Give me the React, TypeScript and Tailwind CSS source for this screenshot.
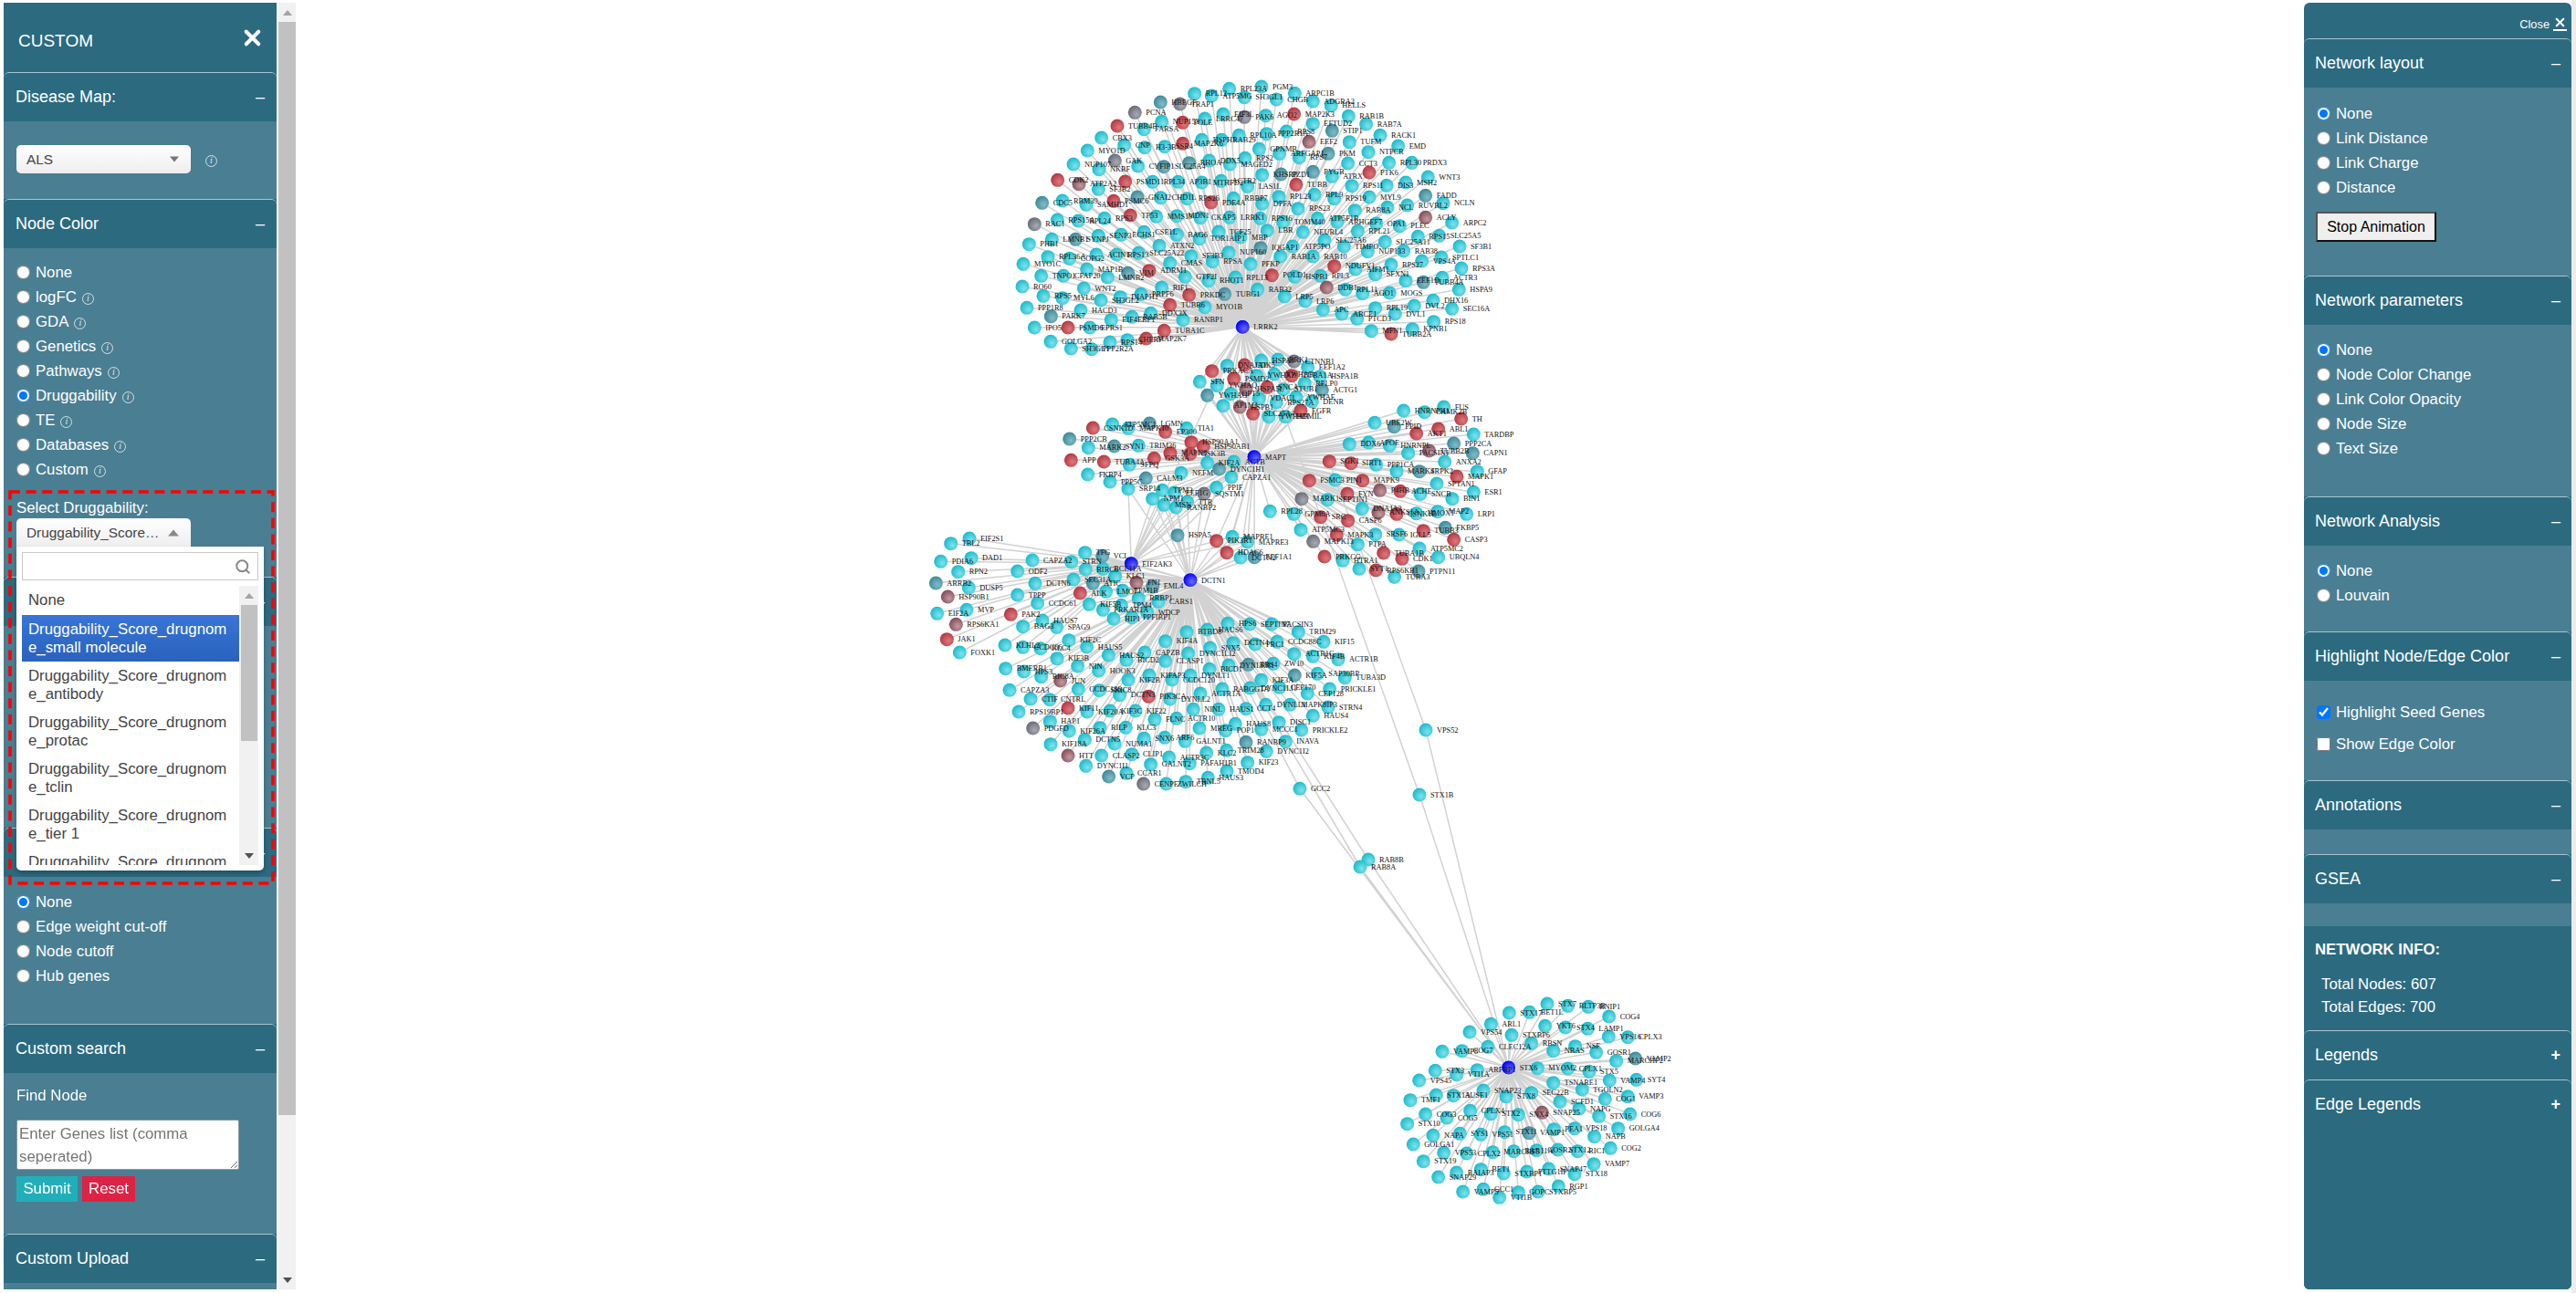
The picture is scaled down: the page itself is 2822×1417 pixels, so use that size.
import React from 'react';
import { Search, X } from 'lucide-react';

type GNode = { zx: number; zy: number; x: number; y: number; label: string; t: string };

const parse = (ox: number, oy: number, raw: string): GNode[] =>
  raw
    .split(';')
    .map(s => s.trim())
    .filter(Boolean)
    .map(s => {
      const [a, b, label, t = 'c'] = s.split(' ');
      return { zx: +a, zy: +b, x: ox + +a / 3, y: oy + +b / 3, label, t };
    });

// coordinates are read off 3x crops, each cluster keeps the origin of its crop
const topNodes = parse(1120, 70, `
680 82 RPL23A;786 75 PGM3;566 98 RPL12;622 105 ATP5MG;730 110 SH3GL1;895 97 ARPC1B;835 117 CHGB;955 123 ADGRA2;1015 137 HELLS;
454 126 HBEGF t;518 132 TRAP1 g;370 160 PCNA g;660 165 EIF3L;458 190 NUP153;527 193 POLE r;600 180 LRRC47;730 175 PAK6 g;800 170 AGO2;893 165 MAP2K3 r;
955 197 EFTUD2;1072 172 RAB1B;1130 198 RAB7A;1018 220 STIP1 t;1176 235 RACK1;1235 270 EMD;1075 257 TUFM;942 256 EEF2 p;1137 290 NTPCR;1005 295 PKM t;
1070 327 CCT3;1205 325 RPL30;1280 325 PRDX3;1140 357 PTK6 r;312 204 TUBB4B r;400 215 FARSA;260 243 CBX3;335 267 CNP;402 275 H3-3B;468 272 SSR4;527 262 MAP2K6 r;
590 250 HSPH1;655 250 RAB29;712 235 RPL10A;803 230 PPP2R1A;868 222 RPS8;778 280 GPNMB;845 295 ARFGAP1;910 308 RPS7;214 285 MYO1D;168 330 NUP107;252 347 NKRF;
304 318 GAK g;380 336 CYFIP1;465 338 SLC25A4 t;548 326 RHOA t;614 318 DDX5;682 330 MAGED2;732 310 RPS2;788 365 KHSRP;850 363 PZD1 t;955 355 PYGB t;1018 370 ATRX;
1333 372 WNT3;1260 390 MSH2;1197 400 DIS3;1083 401 RPS11;116 382 CDK2 r;186 395 ATP2A2 p;250 412 SF3B2;338 387 PSMD11 r;428 388 RPL34;512 388 AP3B1;590 390 MTHFD2;
653 385 ACTR2;740 403 LAS1L;900 397 TUBB r;960 430 RPL9;1025 443 RPS19;1140 438 MYL9;1325 433 FADD t;1383 458 NCLN;1265 465 RUVBL2;1200 472 NCL;1093 482 RAB8A;
65 457 CDC5 t;132 450 RBM39;210 463 SAMHD1;300 451 PSMC6 r;378 438 GNAI2 t;455 440 CHD1L;542 443 RPS26;620 456 PDE4A r;694 442 RBBP7;843 437 RPL23;788 460 DPFA;
906 476 RPS23;1325 505 ACLY p;1412 522 ARPC2;1163 525 OPA1;1240 533 PLEC;970 508 ATP5F1B;1035 520 ARHGEF7;857 520 TOMM40;782 508 RPS16;681 505 LRRK1;
40 527 RAC1 g;115 513 RPS15A;184 516 RPL24;270 508 RPS3;355 498 TP53 r;440 502 MMS19;508 500 MDN1;585 506 CKAP5;97 577 LMNB1;175 577 SYNPJ t;250 565 SENP3;325 562 ECHS1;
400 553 CSE1L;508 562 BAG6;645 552 TCF25;582 575 TOR1AIP1;717 570 MBP;805 548 LBR;922 553 NEURL4;1102 550 RPL21;1300 568 RPS15;1370 565 SLC25A5;1192 585 SLC25A11;
993 580 SLC25A6;1057 600 TIMPO;22 593 PHB1;84 635 RPL36A;155 640 COPG2;243 627 ACIN1;310 627 RPS13;382 622 SLC25A22;450 598 ATXN2;555 632 SF3B3;678 620 NUP160;
783 605 IQGAP1 t;888 600 ATP5PO;848 633 RAB1A;955 633 RAB10;1135 617 NUP133;1253 615 RAB38;1313 648 VPS4A;1377 636 SPTLC1;1437 600 SF3B1;1443 672 RPS3A;3 658 MYO1C;
62 697 TNPO1;135 697 CFAP20;212 675 MAP1B;280 702 LMNB2;347 688 VIM t;417 680 ADRM1 r;485 655 CMAS;625 650 RPSA;750 658 PFKP;1025 665 NDUFV1 r;1095 675 AIFM1;
1212 660 RPS27;1160 692 SFXN1;820 695 POLD1 r;895 700 HSPB1;980 697 RPL3;535 700 GTF2I;612 713 RHOT1;700 702 RPL13;1260 713 EEF1D;1318 718 TUBB4A t;1380 703 ACTR3;
1000 735 DDB1 p;1062 742 RPL11;1118 755 AGO1;1207 753 MOGS;1435 742 HSPA9;0 732 RO60;202 738 WNT2;69 763 RPS5;132 770 MYL6;258 777 SH3GL2;322 767 DIAPH1;390 757 PRPF6;
458 735 RIF1;548 760 PRKDC r;665 757 TUBG1 t;773 742 RAB32;862 765 LRP5;930 780 LRP6;1288 795 DVL2;1350 778 DHX16;1412 805 SEC16A;1160 803 RPL19;1225 822 DVL1;988 808 APC;
1050 822 ABCE1;1100 838 PTCD3;1352 848 RPS18;1282 872 KPNB1;1212 888 TUBB2A r;1147 878 MFN1;15 802 PPP1R8;94 830 PARK7 t;192 810 HACD3;292 842 EIF4EBP1;360 832 RAB5B;
422 820 DDX3X;485 793 TUBB6 r;600 800 MYO1B;528 842 RANBP1;466 877 TUBA1C r;40 867 IPO5;150 867 PSMD6 r;222 867 EPRS1;93 913 GOLGA2;160 936 SH3GL1;228 938 PPP2R2A;
288 915 RPS14;345 908 CHERP;407 903 MAP2K7 r`);

const midNodes = parse(1130, 370, `
755 75 HSPA8;810 72 BRK1;863 78 CTNNB1 g;908 97 EEF1A2;643 92 DNAJA1;700 90 CDK5 r;593 110 PRKACA r;553 145 SFN;665 135 PSMD2 r;740 125 YWHAZ;798 120 YWHAB;855 125 TUBA1A r;
948 128 HSPA1B;898 150 RPLP0;955 172 ACTG1 t;610 158 YWHAQ;578 190 YWHAG t;705 170 HSPA5L p;775 163 SNCA r;828 170 STUB1;870 195 YWHAE;655 185 OPT5;748 200 VDAC1;805 213 RPS27A;
922 210 DENR;630 224 AP1M1;685 228 HSPB1 p;728 250 SLC25A4 r;780 260 YWHAH;835 260 HDMIL;885 240 EGFR r;1223 240 HNRNPH1;1292 245 CAMK2B;1355 228 FUS;1412 267 TH r;1128 280 UBE2W;
1192 293 PPID t;1265 315 AKT1 r;1337 300 ABL1 r;1453 318 TARDBP;1045 350 DDX6;1108 345 APOE;1177 355 HNRNPL;1238 380 PACSIN1;1307 372 TUBB2B p;1388 348 PPP2CA t;1450 380 CAPN1 t;
1358 408 ANXA2;979 407 SGK1 r;1050 413 SIRT1 r;1133 418 PPP1CA;1200 440 MARK4;1275 440 SRPK2 t;1398 457 MAPK1 r;1465 440 GFAP;1332 480 SPTAN1;913 470 PSMC3 r;998 468 PIN1;1088 470 MAPK9 r;
1145 502 P4HB p;1212 505 ACHE r;1278 514 SNCB;1383 530 BIN1;1453 508 ESR1;888 530 MARK1 g;973 533 SEPTIN1;1038 513 FYN r;1087 562 DNAJA3;1140 575 ANKS1A p;1200 580 CSNK1E r;
1265 578 HMOX1;1335 572 MAP2;1430 580 LRP1;784 571 RPL28;862 580 GPM6A;950 590 SRC r;1040 602 CASP6 r;885 632 ATP5MC3;1003 648 MAPK3 r;1130 647 SRSF6;1208 648 IGLL5;1288 635 TUBB3 r;
1360 625 FKBP5 t;1388 664 CASP3 r;926 670 MAPK13 g;1072 680 PTPA;1157 708 TUBA1B r;1275 693 ATP5MC2;1218 727 CDK1 r;1337 722 UBQLN4;963 720 PRKCG r;1023 733 HTRA1;1077 760 SYT1;
1132 765 RPS6KB1 r;1272 768 PTPN11 t;1193 787 TUBA3;266 285 ATP5MC1;202 297 CSNK1D r;318 298 MAPK10;388 282 LGMN t;440 310 EP300 r;510 298 TIA1;125 333 PPP2CB t;187 362 MARK2;
272 357 SYN1 t;352 355 TRIM36;525 344 HSP90AA1 r;565 358 HSP90AB1 r;130 403 APP r;238 408 TUBA4A r;322 418 SFPQ;403 397 GSK3A r;456 380 MAPK8 r;522 382 GSK3B r;578 412 KIF2A;
665 408 ACTB;617 432 DYNC1H1 t;185 450 FKBP4;258 474 PPP5C;376 462 CALM3 t;492 445 NEFM;657 459 CAPZA1;318 497 SRP14;430 502 TPM3;470 510 EEF1G;567 513 SQSTM1 g;608 493 PPIF;
398 530 NPM1;435 550 MSN;475 558 RANBP2;512 540 TTR;480 650 HSPA5 t;608 668 PIK3R1 r;660 655 MAPRE1;710 672 MAPRE3;642 707 HDAC6 r;687 723 DCTN2;733 722 EEF1A1 t`);

const lowNodes = parse(1020, 560, `
126 90 EIF2S1;65 107 TBL2;132 155 DAD1;32 166 PDIA6;89 200 RPN2;16 237 ARRB2 t;124 252 DUSP5;55 282 HSP90B1 p;117 325 MVP;20 337 EIF2A;82 373 RPS6KA1 p;52 422 JAK1 r;94 465 FOXK1;
333 162 CAPZA2;284 198 ODF2;342 238 DCTN6;284 276 TPPP;350 303 CCDC61;262 340 PAK2 r;366 360 HAUS7;302 380 BAG3;413 382 SPAG9;506 137 TFG;563 148 VCL t;461 167 STRN;508 192 BIRC6;
565 190 BCL11A;605 215 KLC1;468 225 SEC31A;532 238 ATIC t;490 270 ALK r;575 265 LMO7;675 235 FN1 p;630 262 EPM1B;728 248 EML4 t;520 307 KIF5B;565 325 PRKAR1A;682 287 RRBP1;625 310 TPM4;
747 298 CARS1;710 333 WDCP;600 354 HIP1;660 350 PPFIBP1;975 370 HPS6;1047 372 SEPTIN7;1120 372 PACSIN3;1207 398 TRIM29;908 390 HAUS6;840 398 BTBD8;770 428 KIF4A;1137 430 CCDC88C;
1290 430 KIF15;993 434 DCTN4;1065 438 PRC1;243 441 KLHL2;302 448 CCDC66;360 452 KLC4;453 425 KIF2C;512 447 HAUS5;583 474 HAUS2;702 465 CAPZB;845 468 DYNC1LI2;917 450 SNX5;1193 470 ACTR1C;
1255 478 KIF4B;1338 488 ACTR1B;414 485 KIF3B;642 490 BICD2;770 493 CLASP1;1043 505 BBS4 t;978 507 DYNLRB1;1125 502 ZW10;482 510 NIN;551 525 HOOK3;245 518 BMERB1;305 528 HPS3;362 545 RIC8A;
915 520 BICD1;852 540 DYNLT1;1195 540 KIF5A t;1270 535 SAP30BP;1360 548 TUBA3D;648 555 KIF2B;792 555 CCDC120;717 540 KIFAP3;1085 556 KIF3A;1145 580 CEP170;1237 600 CEP128;1310 585 PRICKLE1;
425 558 JUN p;484 586 CCDC186;553 590 SKIC8;258 589 CAPZA3;620 605 DCTN3;715 610 PIK3CA r;785 618 DYNLL2;885 600 ACTR1A;957 585 RABGGTA;1048 582 DYNC1LI1;327 618 CTIF;390 620 CNTRL;288 660 RPS19BP1;
450 648 KIF11 r;513 660 KIF20A;588 657 KIF3C;672 657 KIF22;862 652 NINL;945 652 HAUS1;1035 650 CCT4;1100 637 DYNLL1;1180 637 MAPK8IP3;1305 645 STRN4;735 685 FLNC;807 682 ACTR10;391 692 HAP1;
1255 673 HAUS4;1000 700 HAUS8;1143 695 DISC1;335 714 PDGFD g;454 723 KIF26A;555 713 RILP;640 712 KLC3;882 714 MREG;968 722 POP1;1085 718 MCCC1;1217 720 PRICKLE2;505 752 DCTN5;603 765 NUMA1;
700 748 SNX6;768 745 ARF6;835 757 GALNT1;1035 760 RANBP9 t;1165 758 INAVA;393 767 KIF18A;450 804 HTT p;560 804 CLASP2;660 800 CLIP1;782 810 ACTR3C;905 795 KLC2;971 787 TRIM28;1102 790 DYNC1I2;
509 838 DYNC1I1;722 833 GALNT2;850 830 PAFAH1B1;1040 827 KIF23;972 855 TMOD4;584 873 VCP t;642 862 CCAR1;698 897 CENPE g;773 897 ZWILCH;837 890 TRNL5;910 877 HAUS3;1212 913 GCC2`);

const stxNodes = parse(1530, 1090, `
370 60 STX17;495 30 STX7;310 97 ARL1;240 123 VPS54;300 172 CLEC12A;378 133 STXBP6;437 58 BET1L;488 103 YKT6;563 37 BLTP3B;630 40 BNIP1;698 72 COG4;555 108 STX4;628 112 LAMP1;697 138 VPS16;760 140 CPLX3;
443 160 RBSN;515 185 NBAS;587 170 NSF;656 190 GOSR1;722 218 MARCHF2;785 210 VAMP2 t;215 185 COG7;150 187 VAMP8;463 242 MYOM2;563 243 CPLX1;633 253 STX5;700 282 VAMP4;788 280 SYT4;127 250 STX3;
197 263 VTI1A;265 248 ARFRP1;74 282 VPS45;515 290 TSNARE1;610 312 TGOLN2;760 335 VAMP3;685 343 COG1;285 315 SNAP23;360 335 STX8;130 330 STX1A;187 332 AUSE1;45 347 TMF1;537 352 SCFD1;443 323 SEC22B;
400 395 SNX4;478 388 SNAP25 p;600 375 NAPG;665 400 STX16;767 393 COG6;95 393 COG3;165 405 COG5;242 382 CPLX4;310 392 STX2;35 425 STX10;728 440 GOLGA4;435 455 VAMP1 t;517 443 PEA1;650 467 NAPB;
585 440 VPS18;703 505 COG2;120 463 NAPA;208 457 SYS1;277 460 VPS51;355 452 STX11;55 492 GOLGA1;155 520 VPS53;230 522 CPLX2;316 518 MARCHF5;385 515 RAB11A;460 512 GOSR2;530 510 STX12;595 515 RIC1;
88 548 STX19;648 557 VAMP7;137 600 SNAP29;197 585 BAIAP3;277 575 BET1;352 588 STXBP1;428 582 PTTG1IP;500 573 SNAP47;585 590 STX18;218 648 VAMP5;285 640 GCC1;338 667 VTI1B;400 650 GOPC;465 648 STXBP5;532 630 RGP1`);

const hubs = {
  LRRK2: { x: 1361.3, y: 358.3 },
  MAPT: { x: 1374, y: 500.7 },
  DCTN1: { x: 1304, y: 635.7 },
  EIF2AK3: { x: 1239.3, y: 617.7 },
  STX6: { x: 1652.7, y: 1170 },
};

const bridge: GNode[] = [
  { zx: 0, zy: 0, x: 1562, y: 800, label: 'VPS52', t: 'c' },
  { zx: 0, zy: 0, x: 1555, y: 871, label: 'STX1B', t: 'c' },
  { zx: 0, zy: 0, x: 1499, y: 942, label: 'RAB8B', t: 'c' },
  { zx: 0, zy: 0, x: 1490, y: 950, label: 'RAB8A', t: 'c' },
];

type P = { x: number; y: number };
const seg = (a: P, b: P) => `M${a.x.toFixed(1)} ${a.y.toFixed(1)}L${b.x.toFixed(1)} ${b.y.toFixed(1)}`;

const buildEdges = () => {
  const d: string[] = [];
  topNodes.forEach(n => d.push(seg(hubs.LRRK2, n)));
  midNodes.forEach(n => {
    d.push(seg(hubs.MAPT, n));
    if (n.zx < 1000 && n.zy < 270) d.push(seg(hubs.LRRK2, n));
    if (n.zx > 300 && n.zx < 760 && n.zy > 490) {
      d.push(seg(hubs.DCTN1, n));
      if (n.zy < 680) d.push(seg(hubs.EIF2AK3, n));
    }
  });
  lowNodes.forEach(n => {
    const left = n.zx < 430 && n.zy < 470;
    d.push(seg(left ? hubs.EIF2AK3 : hubs.DCTN1, n));
  });
  stxNodes.forEach(n => d.push(seg(hubs.STX6, n)));
  d.push(seg(hubs.LRRK2, hubs.MAPT), seg(hubs.LRRK2, hubs.EIF2AK3), seg(hubs.EIF2AK3, hubs.DCTN1));
  // long links between the clusters
  d.push(seg({ x: 1456, y: 506 }, bridge[0]), seg(bridge[0], hubs.STX6));
  d.push(seg({ x: 1408, y: 457 }, bridge[1]), seg(bridge[1], hubs.STX6));
  d.push(seg(hubs.DCTN1, bridge[2]), seg(hubs.DCTN1, bridge[3]), seg(bridge[2], hubs.STX6), seg(bridge[3], hubs.STX6));
  const gcc2 = lowNodes.find(n => n.label === 'GCC2');
  if (gcc2) d.push(seg(gcc2, hubs.STX6));
  return d.join('');
};

const fills: Record<string, string> = { c: 'url(#nc)', t: 'url(#nt)', r: 'url(#nr)', g: 'url(#ng)', p: 'url(#np)' };

const Sphere = ({ id, light, dark }: { id: string; light: string; dark: string }) => (
  <radialGradient id={id} cx="0.62" cy="0.62" r="0.62">
    <stop offset="0%" stopColor={light} />
    <stop offset="100%" stopColor={dark} />
  </radialGradient>
);

const Network = () => {
  const nodes = [...topNodes, ...midNodes, ...lowNodes, ...stxNodes, ...bridge];
  const hubList = Object.entries(hubs);
  return (
    <svg viewBox="324 0 2200 1417" className="block w-[2200px] h-[1417px]">
      <defs>
        <Sphere id="nc" light="#7fe3ea" dark="#1fbccd" />
        <Sphere id="nt" light="#83bcc4" dark="#3f8b9c" />
        <Sphere id="nr" light="#dc7a7e" dark="#b53a44" />
        <Sphere id="ng" light="#a9abb3" dark="#6a6c78" />
        <Sphere id="np" light="#c49aa0" dark="#84505c" />
        <Sphere id="nb" light="#6a6aff" dark="#0000ee" />
      </defs>
      <path d={buildEdges()} stroke="#d2d2d2" strokeWidth="1.5" fill="none" />
      {nodes.map((n, i) => (
        <circle key={i} cx={n.x} cy={n.y} r="7.5" fill={fills[n.t]} />
      ))}
      {hubList.map(([name, h]) => (
        <circle key={name} cx={h.x} cy={h.y} r="8" fill="url(#nb)" stroke="#fff" strokeWidth="0.8" />
      ))}
      <g fontFamily="'Liberation Serif', serif" fontSize="8.3" fill="#111">
        {nodes.map((n, i) => (
          <text key={i} x={n.x + 12} y={n.y + 2.8}>
            {n.label}
          </text>
        ))}
        {hubList.map(([name, h]) => (
          <text key={name} x={h.x + 12} y={h.y + 2.8}>
            {name}
          </text>
        ))}
      </g>
    </svg>
  );
};

const Info = () => (
  <span className="inline-flex items-center justify-center w-[13px] h-[13px] mt-[3px] rounded-full border border-[#d5e2e7] text-[10px] leading-none italic font-['Liberation_Serif',serif] text-[#e4edf0]">
    i
  </span>
);

const Arrow = ({ up, className }: { up?: boolean; className: string }) => (
  <svg viewBox="0 0 12 7" className={className}>
    <polygon points={up ? '6,0 12,7 0,7' : '0,0 12,0 6,7'} fill="currentColor" />
  </svg>
);

const Section = ({
  title,
  className,
  sign = '–',
  bodyClass = '',
  titleX = 'pl-[13px] pr-[13px]',
  children,
}: {
  title: string;
  className: string;
  sign?: string;
  bodyClass?: string;
  titleX?: string;
  children?: React.ReactNode;
}) => (
  <div className={`relative flex flex-col rounded-t-[6px] border-t border-[#a9c4ce] bg-[#4a7e92] ${className}`}>
    <div className={`flex h-[53px] shrink-0 items-center justify-between rounded-t-[6px] bg-[#2c6a80] text-[18px] text-white ${titleX}`}>
      <span>{title}</span>
      <span className={sign === '+' ? 'font-bold' : ''}>{sign}</span>
    </div>
    <div className={`flex-1 ${bodyClass}`}>{children}</div>
  </div>
);

const Radios = ({
  name,
  items,
  checked = 0,
  top = 'pt-[13px]',
}: {
  name: string;
  items: [string, boolean?][];
  checked?: number;
  top?: string;
}) => (
  <div className={`flex flex-col pl-[14px] ${top}`}>
    {items.map(([label, info], i) => (
      <label key={label} className="flex h-[27px] items-center gap-[6px] text-[16.8px] text-white">
        <input type="radio" name={name} defaultChecked={i === checked} className="m-0 h-[15px] w-[15px] shrink-0" />
        <span>{label}</span>
        {info && <Info />}
      </label>
    ))}
  </div>
);

const SelectBox = ({ children }: { children: React.ReactNode }) => (
  <div className="flex h-[31px] w-[191px] items-center justify-between bg-gradient-to-b from-white to-[#eeeeee] pl-[11px] pr-[13px] text-[15.4px] text-[#444444]">
    {children}
  </div>
);

const options = [
  'Druggability_Score_drugnome_small molecule',
  'Druggability_Score_drugnome_antibody',
  'Druggability_Score_drugnome_protac',
  'Druggability_Score_drugnome_tclin',
  'Druggability_Score_drugnome_tier 1',
  'Druggability_Score_drugnome_tier 2',
];

const DruggabilityPicker = () => (
  <div className="absolute left-[5px] top-[318px] z-10 h-[433px] w-[292px] pl-[9px] pt-[9px]">
    <svg className="absolute inset-0 h-full w-full" viewBox="0 0 292 433">
      <rect x="2" y="2" width="288" height="429" fill="none" stroke="#ff0000" strokeWidth="3.6" strokeDasharray="11 6.6" />
    </svg>
    <div className="relative h-[22px] text-[16.8px] leading-[22px] text-white">Select Druggability:</div>
    <div className="relative overflow-hidden rounded-t-[5px] w-[191px]">
      <SelectBox>
        <span className="w-[148px] truncate">Druggability_Score_drugnome_small molecule</span>
        <Arrow up className="h-[8px] w-[12px] text-[#888888]" />
      </SelectBox>
    </div>
    <div className="relative flex h-[355px] w-[271px] flex-col gap-[6px] rounded-b-[5px] bg-white p-[6px] shadow-[0_3px_5px_rgba(0,0,0,0.25)]">
      <div className="flex h-[31px] shrink-0 items-center justify-end border-[1.5px] border-[#c8c8c8] pr-[7px]">
        <Search className="h-[18px] w-[18px] text-[#888888]" strokeWidth={2.6} />
      </div>
      <div className="flex flex-1 overflow-hidden">
        <div className="h-full w-[238px] overflow-hidden text-[16.8px] leading-[20px] text-[#444444]">
          <div className="flex h-[32px] items-center px-[7px]">None</div>
          {options.map((o, i) => (
            <div
              key={o}
              className={`break-all px-[7px] py-[5.5px] ${i === 0 ? 'bg-gradient-to-b from-[#3875d7] to-[#2a62bc] text-white' : ''}`}
            >
              {o}
            </div>
          ))}
        </div>
        <div className="relative flex h-full w-[21px] flex-col items-center bg-[#f1f1f1]">
          <div className="flex h-[21px] w-full items-center justify-center">
            <Arrow up className="h-[6px] w-[10px] text-[#a3a3a3]" />
          </div>
          <div className="h-[149px] w-[18px] bg-[#c1c1c1]" />
          <div className="flex-1" />
          <div className="flex h-[21px] w-full items-center justify-center">
            <Arrow className="h-[6px] w-[10px] text-[#505050]" />
          </div>
        </div>
      </div>
    </div>
  </div>
);

const LeftPanel = () => (
  <div className="flex w-[299px] flex-col bg-[#2c6a80]">
    <div className="flex h-[76px] shrink-0 items-center justify-between pl-[16px] pr-[13px] text-[19px] text-white">
      <span className="pt-[9px]">CUSTOM</span>
      <X className="h-[27px] w-[27px]" strokeWidth={3.6} />
    </div>
    <Section title="Disease Map:" className="h-[139px]">
      <div className="flex items-center gap-[16px] pl-[14px] pt-[26px]">
        <div className="overflow-hidden rounded-[5px]">
          <SelectBox>
            <span>ALS</span>
            <Arrow className="h-[7px] w-[10px] text-[#777777]" />
          </SelectBox>
        </div>
        <Info />
      </div>
    </Section>
    <Section title="Node Color" className="h-[414px] z-10">
      <Radios
        name="node-color"
        checked={5}
        items={[
          ['None'],
          ['logFC', true],
          ['GDA', true],
          ['Genetics', true],
          ['Pathways', true],
          ['Druggability', true],
          ['TE', true],
          ['Databases', true],
          ['Custom', true],
        ]}
      />
      <DruggabilityPicker />
    </Section>
    <Section title="" className="h-[275px]" />
    <Section title="" className="h-[215px]">
      <Radios name="filter" top="pt-[14px]" items={[['None'], ['Edge weight cut-off'], ['Node cutoff'], ['Hub genes']]} />
    </Section>
    <Section title="Custom search" className="h-[230px]">
      <div className="pl-[14px] pt-[12px] text-[16.8px] text-white">
        <div className="h-[26px] leading-[26px]">Find Node</div>
        <textarea
          placeholder="Enter Genes list (comma seperated)"
          className="mt-[13px] block h-[55px] w-[244px] rounded-[2px] border border-[#8a9aa2] bg-white px-[2px] py-[2px] text-[16.8px] leading-[25px] text-[#333333] placeholder:text-[#757575]"
        />
        <div className="mt-[7px] flex gap-[5px]">
          <button className="h-[28px] w-[67px] bg-[#22aeb9] text-white">Submit</button>
          <button className="h-[28px] w-[58px] bg-[#dc2345] text-white">Reset</button>
        </div>
      </div>
    </Section>
    <Section title="Custom Upload" className="flex-1" />
  </div>
);

const RightSection = (props: React.ComponentProps<typeof Section>) => <Section titleX="pl-[12px] pr-[12px]" {...props} />;

const RightPanel = () => (
  <div className="flex w-[293px] flex-col rounded-[6px] bg-[#2c6a80]">
    <div className="flex h-[39px] shrink-0 items-start justify-end gap-[4px] pr-[5px] pt-[14px] text-[12.8px] text-white">
      <span className="leading-[20px]">Close</span>
      <span className="border-b-2 border-white">
        <X className="h-[15px] w-[15px]" strokeWidth={3.4} />
      </span>
    </div>
    <RightSection title="Network layout" className="h-[260px]">
      <Radios name="layout" top="pt-[15px]" items={[['None'], ['Link Distance'], ['Link Charge'], ['Distance']]} />
      <button className="ml-[13px] mt-[13px] h-[33px] w-[132px] border-2 border-[#555555] border-b-[#111111] border-r-[#111111] bg-[#efefef] text-[16px] text-black">
        Stop Animation
      </button>
    </RightSection>
    <RightSection title="Network parameters" className="h-[242px]">
      <Radios name="params" top="pt-[14px]" items={[['None'], ['Node Color Change'], ['Link Color Opacity'], ['Node Size'], ['Text Size']]} />
    </RightSection>
    <RightSection title="Network Analysis" className="h-[148px]">
      <Radios name="analysis" top="pt-[14px]" items={[['None'], ['Louvain']]} />
    </RightSection>
    <RightSection title="Highlight Node/Edge Color" className="h-[163px]">
      <div className="flex flex-col pl-[14px] pt-[17px] text-[16.8px] text-white">
        <label className="flex h-[35px] items-center gap-[6px]">
          <input type="checkbox" defaultChecked className="m-0 h-[15px] w-[15px]" />
          <span>Highlight Seed Genes</span>
        </label>
        <label className="flex h-[35px] items-center gap-[6px]">
          <input type="checkbox" className="m-0 h-[15px] w-[15px]" />
          <span>Show Edge Color</span>
        </label>
      </div>
    </RightSection>
    <RightSection title="Annotations" className="h-[81px]" />
    <RightSection title="GSEA" className="h-[79px]" />
    <div className="h-[114px] shrink-0 pl-[12px] pt-[16px] text-[16.8px] text-white">
      <div className="h-[20px] font-bold leading-[20px]">NETWORK INFO:</div>
      <div className="mt-[15px] pl-[7px] leading-[25px]">
        <div>Total Nodes: 607</div>
        <div>Total Edges: 700</div>
      </div>
    </div>
    <RightSection title="Legends" sign="+" className="h-[54px]" />
    <RightSection title="Edge Legends" sign="+" className="flex-1 rounded-b-[6px]" bodyClass="rounded-b-[6px] bg-[#2c6a80]" />
  </div>
);

const PageScrollbar = () => (
  <div className="ml-[2px] flex w-[19px] flex-col items-center bg-[#f1f1f1]">
    <div className="flex h-[21px] w-full items-center justify-center">
      <Arrow up className="h-[6px] w-[10px] text-[#a3a3a3]" />
    </div>
    <div className="h-[1198px] w-full bg-[#c1c1c1]" />
    <div className="flex-1" />
    <div className="flex h-[21px] w-full items-center justify-center">
      <Arrow className="h-[6px] w-[10px] text-[#505050]" />
    </div>
  </div>
);

export default function App() {
  return (
    <div className="flex h-[1417px] w-[2822px] overflow-hidden bg-white font-['Liberation_Sans',Arial,sans-serif]">
      <div className="flex w-[324px] shrink-0 pb-[4px] pl-[4px] pt-[3px]">
        <LeftPanel />
        <PageScrollbar />
      </div>
      <div className="w-[2200px] shrink-0">
        <Network />
      </div>
      <div className="flex w-[298px] shrink-0 pb-[4px] pt-[3px]">
        <RightPanel />
        <div className="-mb-[4px] -mt-[3px] flex-1 bg-[#ececec]" />
      </div>
    </div>
  );
}
